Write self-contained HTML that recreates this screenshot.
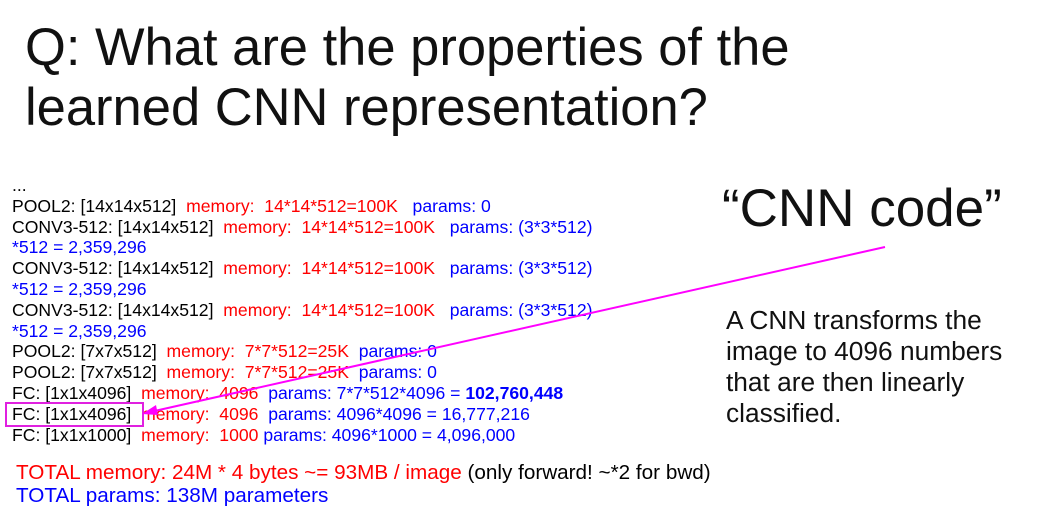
<!DOCTYPE html>
<html><head><style>
body{margin:0;width:1037px;height:505px;background:#fff;position:relative;overflow:hidden;font-family:"Liberation Sans",Arial,sans-serif}
.t{position:absolute;left:25px;font-size:52.5px;line-height:60px;color:#111;white-space:nowrap}
.l{position:absolute;left:12px;font-size:17.6px;white-space:pre;line-height:20.8px;color:#000}
.r{color:#f00}.b{color:#00f}
</style></head><body>
<div class="t" style="top:18px">Q: What are the properties of the</div>
<div class="t" style="top:78px">learned CNN representation?</div>
<div class="l" style="top:175px">...
POOL2: [14x14x512]  <span class="r">memory:  14*14*512=100K</span>   <span class="b">params: 0</span>
CONV3-512: [14x14x512]  <span class="r">memory:  14*14*512=100K</span>   <span class="b">params: (3*3*512)
*512 = 2,359,296</span>
CONV3-512: [14x14x512]  <span class="r">memory:  14*14*512=100K</span>   <span class="b">params: (3*3*512)
*512 = 2,359,296</span>
CONV3-512: [14x14x512]  <span class="r">memory:  14*14*512=100K</span>   <span class="b">params: (3*3*512)
*512 = 2,359,296</span>
POOL2: [7x7x512]  <span class="r">memory:  7*7*512=25K</span>  <span class="b">params: 0</span>
POOL2: [7x7x512]  <span class="r">memory:  7*7*512=25K</span>  <span class="b">params: 0</span>
FC: [1x1x4096]  <span class="r">memory:  4096</span>  <span class="b">params: 7*7*512*4096 = <b>102,760,448</b></span>
FC: [1x1x4096]  <span class="r">memory:  4096</span>  <span class="b">params: 4096*4096 = 16,777,216</span>
FC: [1x1x1000]  <span class="r">memory:  1000</span> <span class="b">params: 4096*1000 = 4,096,000</span></div>
<div class="l" style="top:461px;left:16px;font-size:20.7px;line-height:23px"><span class="r">TOTAL memory: 24M * 4 bytes ~= 93MB / image</span> (only forward! ~*2 for bwd)
<span class="b">TOTAL params: 138M parameters</span></div>
<div style="position:absolute;left:722px;top:178px;font-size:53px;color:#111;white-space:nowrap">“CNN code”</div>
<div style="position:absolute;left:726px;top:305px;font-size:26.3px;line-height:31px;color:#111">A CNN transforms the<br>image to 4096 numbers<br>that are then linearly<br>classified.</div>
<svg style="position:absolute;left:0;top:0" width="1037" height="505">
<rect x="6" y="403" width="137" height="23" fill="none" stroke="#e020e0" stroke-width="2"/>
<line x1="885" y1="247" x2="150" y2="412" stroke="#f0f" stroke-width="2"/>
<polygon points="142,414 156,405 158,415" fill="#f0f"/>
</svg>
</body></html>
